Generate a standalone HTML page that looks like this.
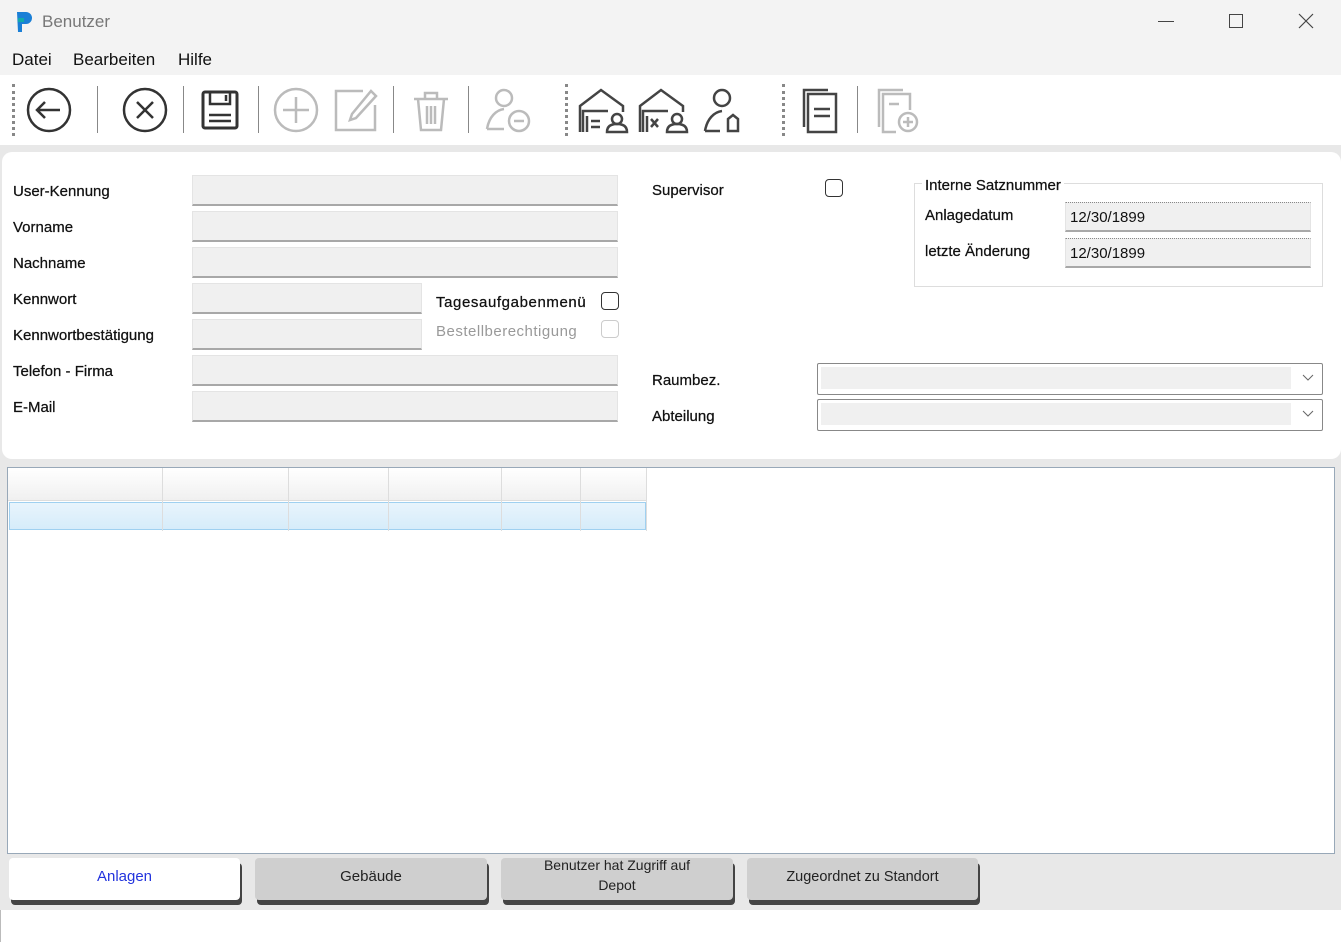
<!DOCTYPE html>
<html><head><meta charset="utf-8"><style>
*{box-sizing:border-box;margin:0;padding:0}
body{width:1341px;height:942px;background:#fff;font-family:"Liberation Sans",sans-serif;font-size:15px;color:#222;position:relative;overflow:hidden}
.a{position:absolute}
.inp{position:absolute;background:#f0f0f0;border:1px solid #e4e4e4;border-bottom:2px solid #a8a8a8;height:31px}
.lbl{position:absolute;font-size:15px;color:#111;-webkit-text-stroke:0.25px #111}
.cb{position:absolute;width:18px;height:18px;border:1.5px solid #333;border-radius:4px;background:#fff}
.tab{position:absolute;top:858px;height:42px;background:#cfcfcf;border-radius:4px;box-shadow:2px 5px 0 #444;text-align:center;font-size:15px;display:flex;align-items:center;justify-content:center;line-height:20px;padding-bottom:4px}
.sep{position:absolute;top:86px;width:1px;height:47px;background:#888}
.dot{position:absolute;top:84px;width:0;height:52px;border-left:3px dotted #888}
svg{position:absolute}
</style></head><body>
<div class="a" style="left:0;top:0;width:1341px;height:75px;background:#f3f3f3"></div>
<svg style="left:14px;top:10px" width="22" height="24" viewBox="0 0 22 24"><path d="M3 2h9a6 6 0 0 1 0 12H8v8H4z" fill="#1a7fd6"/><path d="M4 8h6v4H4z" fill="#1aa"/></svg>
<div class="a" style="left:42px;top:12px;font-size:17px;color:#777">Benutzer</div>
<div class="a" style="left:1158px;top:21px;width:16px;height:1px;background:#444"></div>
<div class="a" style="left:1229px;top:14px;width:14px;height:14px;border:1px solid #444"></div>
<svg style="left:1298px;top:13px" width="16" height="16"><path d="M1 1L15 15M15 1L1 15" stroke="#444" stroke-width="1.2"/></svg>
<div class="a" style="left:12px;top:50px;font-size:17px;color:#111">Datei</div>
<div class="a" style="left:73px;top:50px;font-size:17px;color:#111">Bearbeiten</div>
<div class="a" style="left:178px;top:50px;font-size:17px;color:#111">Hilfe</div>
<div class="a" style="left:0;top:75px;width:1341px;height:70px;background:#fff"></div>
<div class="a" style="left:0;top:145px;width:1341px;height:797px;background:#e8e8e8"></div>
<div class="dot" style="left:12px"></div>
<svg style="left:26px;top:87px" width="46" height="46"><circle cx="23" cy="23" r="21" fill="none" stroke="#333" stroke-width="2.5"/><path d="M11 23h23M19 15l-8 8 8 8" fill="none" stroke="#333" stroke-width="2.5"/></svg>
<div class="sep" style="left:97px"></div>
<svg style="left:122px;top:87px" width="46" height="46"><circle cx="23" cy="23" r="21" fill="none" stroke="#333" stroke-width="2.5"/><path d="M15 15l16 16M31 15l-16 16" stroke="#333" stroke-width="2.5"/></svg>
<div class="sep" style="left:183px"></div>
<svg style="left:201px;top:90px" width="38" height="40"><rect x="2" y="2" width="34" height="36" rx="2" fill="none" stroke="#333" stroke-width="3"/><path d="M9 2v12h20V2M25 5v6M8 25h22M8 31h22" fill="none" stroke="#333" stroke-width="2.5"/></svg>
<div class="sep" style="left:258px"></div>
<svg style="left:273px;top:87px" width="46" height="46"><circle cx="23" cy="23" r="21" fill="none" stroke="#bbb" stroke-width="2.5"/><path d="M23 10v26M10 23h26" stroke="#bbb" stroke-width="2.5"/></svg>
<svg style="left:333px;top:87px" width="46" height="46"><path d="M30 4H3v39h39V18" fill="none" stroke="#bbb" stroke-width="2.5"/><path d="M38 4l5 5-20 22-6 2 2-6z" fill="none" stroke="#bbb" stroke-width="2.5"/></svg>
<div class="sep" style="left:393px"></div>
<svg style="left:412px;top:87px" width="38" height="46"><path d="M2 12h34M13 12V6h12v6M6 12l3 31h20l3-31M15 19v18M19 19v18M23 19v18" fill="none" stroke="#bbb" stroke-width="2.5"/></svg>
<div class="sep" style="left:468px"></div>
<svg style="left:484px;top:87px" width="50" height="48"><circle cx="20" cy="11" r="8" fill="none" stroke="#bbb" stroke-width="2.5"/><path d="M3 42c2-12 9-19 17-20" fill="none" stroke="#bbb" stroke-width="2.5"/><path d="M3 42h17" stroke="#bbb" stroke-width="2.5"/><circle cx="35" cy="34" r="10" fill="none" stroke="#bbb" stroke-width="2.5"/><path d="M30 34h10" stroke="#bbb" stroke-width="2.5"/></svg>
<div class="dot" style="left:565px"></div>
<svg style="left:577px;top:86px" width="52" height="48"><path d="M3 46V20L24 4l22 16v6" fill="none" stroke="#444" stroke-width="2.5"/><path d="M6 46V25h25M10 46V30" fill="none" stroke="#444" stroke-width="2.5"/><path d="M14 35h9M14 41h9" stroke="#444" stroke-width="2.5"/><circle cx="40" cy="33" r="5" fill="none" stroke="#444" stroke-width="2.5"/><path d="M30 46c0-6 4-8 10-8s10 2 10 8z" fill="none" stroke="#444" stroke-width="2.5"/></svg>
<svg style="left:637px;top:86px" width="52" height="48"><path d="M3 46V20L24 4l22 16v6" fill="none" stroke="#444" stroke-width="2.5"/><path d="M6 46V25h25M10 46V30" fill="none" stroke="#444" stroke-width="2.5"/><path d="M14 33l7 8M21 33l-7 8" stroke="#444" stroke-width="2.5"/><circle cx="40" cy="33" r="5" fill="none" stroke="#444" stroke-width="2.5"/><path d="M30 46c0-6 4-8 10-8s10 2 10 8z" fill="none" stroke="#444" stroke-width="2.5"/></svg>
<svg style="left:702px;top:86px" width="42" height="48"><circle cx="20" cy="12" r="8" fill="none" stroke="#444" stroke-width="2.5"/><path d="M3 45c2-12 9-19 17-20M3 45h15" fill="none" stroke="#444" stroke-width="2.5"/><path d="M26 45V33l5-4 5 4v12z" fill="none" stroke="#444" stroke-width="2.5"/></svg>
<div class="dot" style="left:782px"></div>
<svg style="left:801px;top:87px" width="40" height="48"><path d="M3 40V3h24" fill="none" stroke="#444" stroke-width="2.5"/><rect x="7" y="7" width="28" height="38" fill="none" stroke="#444" stroke-width="2.5"/><path d="M13 22h16M13 29h16" stroke="#444" stroke-width="2.5"/></svg>
<div class="sep" style="left:857px"></div>
<svg style="left:876px;top:87px" width="46" height="48"><path d="M3 40V3h24" fill="none" stroke="#bbb" stroke-width="2.5"/><path d="M20 45H7V7h27v16" fill="none" stroke="#bbb" stroke-width="2.5"/><path d="M13 17h10" stroke="#bbb" stroke-width="2.5"/><circle cx="32" cy="35" r="9" fill="none" stroke="#bbb" stroke-width="2.5"/><path d="M32 30v10M27 35h10" stroke="#bbb" stroke-width="2.5"/></svg>

<div class="a" style="left:2px;top:152px;width:1339px;height:307px;background:#fff;border-radius:10px"></div>
<div class="lbl" style="left:13px;top:183px">User-Kennung</div>
<div class="lbl" style="left:13px;top:219px">Vorname</div>
<div class="lbl" style="left:13px;top:255px">Nachname</div>
<div class="lbl" style="left:13px;top:291px">Kennwort</div>
<div class="lbl" style="left:13px;top:327px">Kennwortbestätigung</div>
<div class="lbl" style="left:13px;top:363px">Telefon - Firma</div>
<div class="lbl" style="left:13px;top:399px">E-Mail</div>
<div class="inp" style="left:192px;top:175px;width:426px"></div>
<div class="inp" style="left:192px;top:211px;width:426px"></div>
<div class="inp" style="left:192px;top:247px;width:426px"></div>
<div class="inp" style="left:192px;top:283px;width:230px"></div>
<div class="inp" style="left:192px;top:319px;width:230px"></div>
<div class="inp" style="left:192px;top:355px;width:426px"></div>
<div class="inp" style="left:192px;top:391px;width:426px"></div>
<div class="lbl" style="left:436px;top:294px;letter-spacing:0.6px">Tagesaufgabenmenü</div>
<div class="cb" style="left:601px;top:292px"></div>
<div class="lbl" style="left:436px;top:323px;color:#999;-webkit-text-stroke:0;letter-spacing:0.5px">Bestellberechtigung</div>
<div class="cb" style="left:601px;top:320px;border-color:#ccc"></div>
<div class="lbl" style="left:652px;top:182px">Supervisor</div>
<div class="cb" style="left:825px;top:179px"></div>
<div class="a" style="left:914px;top:183px;width:409px;height:104px;border:1px solid #ddd"></div>
<div class="lbl" style="left:922px;top:177px;background:#fff;padding:0 3px">Interne Satznummer</div>
<div class="lbl" style="left:925px;top:207px">Anlagedatum</div>
<div class="lbl" style="left:925px;top:243px">letzte Änderung</div>
<div class="inp" style="left:1065px;top:202px;width:246px;border-top:1px dotted #888;height:30px;padding:6px 4px;font-size:15px;color:#111">12/30/1899</div>
<div class="inp" style="left:1065px;top:238px;width:246px;border-top:1px dotted #888;height:30px;padding:6px 4px;font-size:15px;color:#111">12/30/1899</div>
<div class="lbl" style="left:652px;top:372px">Raumbez.</div>
<div class="lbl" style="left:652px;top:408px">Abteilung</div>
<div class="a" style="left:817px;top:363px;width:506px;height:32px;border:1.5px solid #888;border-radius:2px;background:#fff"><div class="a" style="left:3px;top:3px;width:470px;height:22px;background:#f0f0f0"></div><svg style="left:484px;top:10px" width="12" height="8"><path d="M1 1l5 5 5-5" fill="none" stroke="#666"/></svg></div>
<div class="a" style="left:817px;top:399px;width:506px;height:32px;border:1.5px solid #888;border-radius:2px;background:#fff"><div class="a" style="left:3px;top:3px;width:470px;height:22px;background:#f0f0f0"></div><svg style="left:484px;top:10px" width="12" height="8"><path d="M1 1l5 5 5-5" fill="none" stroke="#666"/></svg></div>

<div class="a" style="left:7px;top:467px;width:1328px;height:387px;background:#fff;border:1px solid #98a8b8"></div>
<div class="a" style="left:8px;top:468px;width:639px;height:33px;background:linear-gradient(#fff,#f0f0f0);border-bottom:1px solid #ddd"></div>
<div class="a" style="left:9px;top:502px;width:637px;height:28px;background:linear-gradient(#e8f4fc,#d6ecfa);border:1px solid #9fd0f0"></div>
<div class="a" style="left:162px;top:468px;width:1px;height:63px;background:#ddd"></div>
<div class="a" style="left:288px;top:468px;width:1px;height:63px;background:#ddd"></div>
<div class="a" style="left:388px;top:468px;width:1px;height:63px;background:#ddd"></div>
<div class="a" style="left:501px;top:468px;width:1px;height:63px;background:#ddd"></div>
<div class="a" style="left:580px;top:468px;width:1px;height:63px;background:#ddd"></div>
<div class="a" style="left:646px;top:468px;width:1px;height:63px;background:#ddd"></div>

<div class="tab" style="left:9px;width:231px;background:#fff;color:#2233dd">Anlagen</div>
<div class="tab" style="left:255px;width:232px">Gebäude</div>
<div class="tab" style="left:501px;width:232px;font-size:14px;padding-bottom:8px">Benutzer hat Zugriff auf<br>Depot</div>
<div class="tab" style="left:747px;width:231px;font-size:14.5px">Zugeordnet zu Standort</div>
<div class="a" style="left:0;top:910px;width:1341px;height:32px;background:#fff;border-left:1px solid #bbb"></div>
</body></html>
